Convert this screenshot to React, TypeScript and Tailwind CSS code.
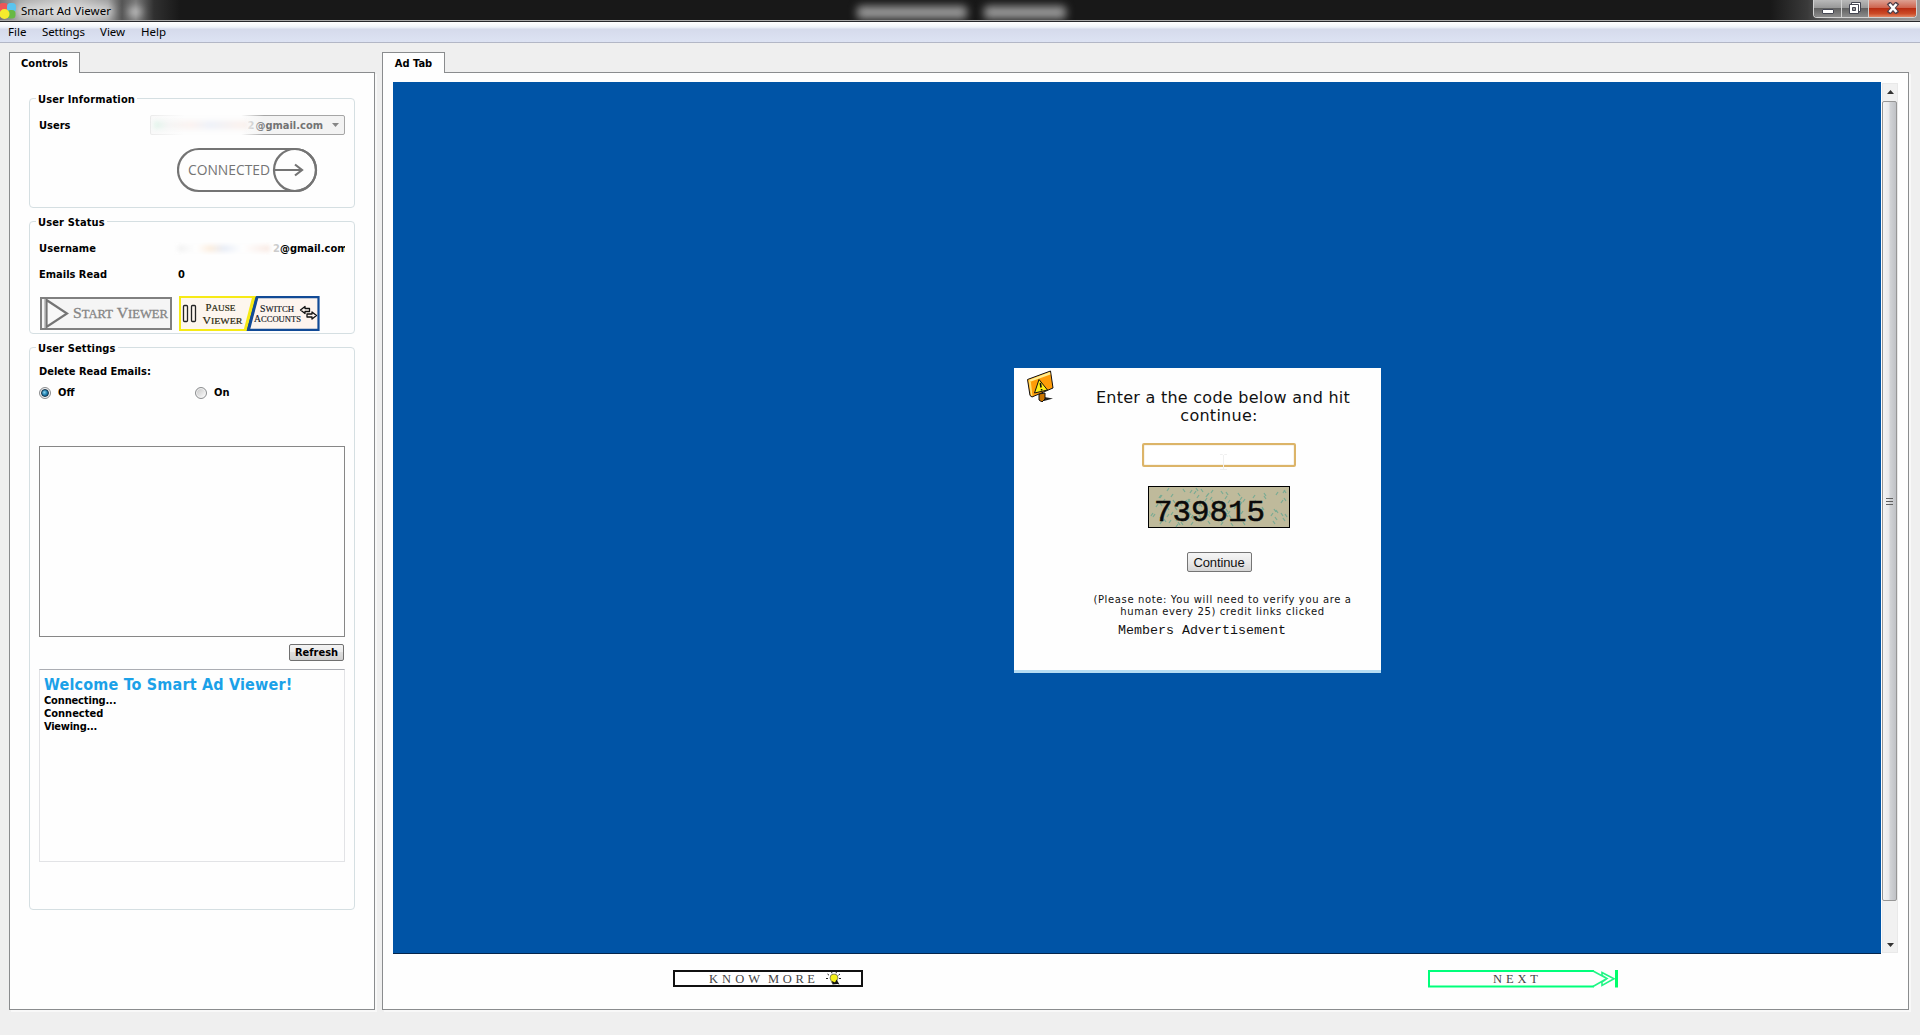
import React from "react";

const TAHOMA = "font-['DejaVu_Sans_Condensed','DejaVu_Sans',sans-serif] [font-stretch:condensed] font-bold text-[11px] leading-[13px] whitespace-nowrap";

function Group({ title, className, children }: { title: string; className: string; children: React.ReactNode }) {
  return (
    <section className={`relative w-[326px] shrink-0 rounded-[4px] border border-[#d5dfe2] ${className}`}>
      <h2 className={`absolute -top-[6px] left-[6px] bg-[#fefefe] px-[2px] tracking-[0.15px] ${TAHOMA}`}>{title}</h2>
      {children}
    </section>
  );
}

function Panel({ tab, tabClass, className, children }: { tab: string; tabClass: string; className: string; children: React.ReactNode }) {
  return (
    <div className={`flex flex-col ${className}`}>
      <div className={`relative z-10 -mb-px flex h-[21px] items-center justify-center border border-b-0 border-[#8a8c8e] bg-[#fefefe] ${tabClass} ${TAHOMA}`}>{tab}</div>
      <div className="flex min-h-0 flex-1 flex-col border border-[#8a8c8e] bg-[#fefefe] shadow-[2px_2px_0_#f8f8f8]">{children}</div>
    </div>
  );
}

function Logo() {
  return (
    <svg className="h-[16px] w-[16px]" viewBox="0 0 16 16">
      <rect x="-1" y="0" width="9" height="9" rx="3.5" fill="#ed5757" />
      <rect x="7" y="0" width="9" height="9" rx="3.5" fill="#5ac4ee" />
      <rect x="7" y="7" width="8.500" height="8.500" rx="3.500" fill="#68b944" />
      <circle cx="4.500" cy="11" r="5" fill="#f5eb2d" />
    </svg>
  );
}

function TitleBar() {
  return (
    <header className="relative flex h-[22px] shrink-0 items-start overflow-hidden border-b border-[#26272b] bg-[#181818] shadow-[inset_0_-1px_0_#a9a9a9]">
      <div className="absolute inset-y-0 left-0 h-[20px] w-[180px] bg-[linear-gradient(to_right,#777_0,#aaa_20px,#c4c4c4_70px,#9a9a9a_108px,#555_122px,#777_136px,#303030_154px,#181818_180px)]" />
      <div className="absolute top-[4px] left-[16px] h-[14px] w-[98px] rounded-full bg-white/50 blur-[4px]" />
      <div className="absolute top-[7px] left-[128px] h-[10px] w-[14px] rounded-full bg-white/60 blur-[4px]" />
      <div className="absolute top-[6px] left-[857px] h-[13px] w-[110px] rounded bg-[#999] blur-[4px]" />
      <div className="absolute top-[6px] left-[984px] h-[13px] w-[82px] rounded bg-[#999] blur-[4px]" />
      <div className="absolute top-0 right-0 h-[20px] w-[150px] bg-[linear-gradient(to_right,#181818,#3a3a3a_25%,#777_45%,#999)]" />
      <div className="relative flex pt-[3px]">
        <Logo />
        <span className="ml-[5px] font-['Noto_Sans',sans-serif] text-[11.5px] leading-[16px] tracking-[0.05px] whitespace-nowrap text-black">Smart Ad Viewer</span>
      </div>
      <div className="relative mr-[3px] ml-auto flex h-[18px] w-[104px] overflow-hidden rounded-b-[4px] border border-t-0 border-[#d2d2d2] bg-[#444]">
        <button className="flex w-[28px] items-center justify-center border-r border-[#d2d2d2] bg-[linear-gradient(#b9b9b9_0,#999_45%,#626262_50%,#8c8c8c)]">
          <svg className="mt-[4px]" width="14" height="8"><rect x="1.500" y="2.500" width="11" height="4" rx=".5" fill="#fff" stroke="#454752" /></svg>
        </button>
        <button className="flex w-[27px] items-center justify-center border-r border-[#d2d2d2] bg-[linear-gradient(#b9b9b9_0,#999_45%,#626262_50%,#8c8c8c)]">
          <svg className="-mt-[2px]" width="14" height="14" viewBox="0 0 14 14">
            <path d="M3.500 1.500h9v9h-9z" fill="#fff" stroke="#454752" />
            <path d="M1.500 3.500h9v9h-9z" fill="#fff" stroke="#454752" />
            <path d="M4.500 6.500h3v3h-3z" fill="#999" stroke="#454752" />
          </svg>
        </button>
        <button className="flex flex-1 items-center justify-center bg-[linear-gradient(#dda092_0,#cf6651_44%,#b92d13_50%,#cc4b27_80%,#e28663)]">
          <svg className="-mt-[2px]" width="14" height="12" viewBox="0 0 14 12">
            <path d="M4 2.500l6 7M10 2.500l-6 7" stroke="#50404a" strokeWidth="4.600" strokeLinecap="square" />
            <path d="M3.500 2l7 8M10.500 2l-7 8" stroke="#fff" strokeWidth="2.600" />
          </svg>
        </button>
      </div>
    </header>
  );
}

function MenuBar() {
  return (
    <nav className="flex h-[21px] shrink-0 border-b border-[#b3b7c6] bg-[linear-gradient(#ffffff_0,#f4f7fb_4px,#e6ebf5_6px,#d5daeb_7px,#dde3f3_20px)] font-['Noto_Sans',sans-serif] text-[11.5px] leading-[20px] text-black">
      <span className="w-[34px] pl-[8px]">File</span>
      <span className="w-[58px] pl-[8px] tracking-[-0.1px]">Settings</span>
      <span className="w-[41px] pl-[8px]">View</span>
      <span className="w-[50px] pl-[8px]">Help</span>
    </nav>
  );
}

function ConnectedButton() {
  return (
    <svg className="mt-[12px] ml-[147px] block h-[46px] w-[141px] font-normal [font-stretch:normal]" viewBox="0 0 141 46">
      <rect x="1" y="2" width="138" height="42" rx="21" fill="none" stroke="#747474" strokeWidth="2.200" />
      <circle cx="118" cy="23" r="21" fill="none" stroke="#747474" strokeWidth="2.200" />
      <path d="M97 23h28M118 17.500l7 5.500-7 5.500" fill="none" stroke="#747474" strokeWidth="2.200" />
      <text x="11" y="28.300" fontFamily="Open Sans, sans-serif" fontSize="14" textLength="82" lengthAdjust="spacingAndGlyphs" fill="#747474">CONNECTED</text>
    </svg>
  );
}

function StartButton() {
  return (
    <svg className="block h-[33px] w-[132px]" viewBox="0 0 132 33">
      <rect x="1" y="1" width="130" height="31" fill="#f5f5f5" stroke="#808080" strokeWidth="2" />
      <path d="M6.500 3L27 16.500 6.500 30z" fill="#f8f8f8" stroke="#747474" strokeWidth="2.200" />
      <path d="M4.500 2v29" stroke="#c4c4c4" />
      <text x="33" y="21" fontFamily="Liberation Serif, serif" fontSize="15" fill="#858585" stroke="#858585" strokeWidth=".3" textLength="95" lengthAdjust="spacingAndGlyphs">S<tspan fontSize="12">TART</tspan> V<tspan fontSize="12">IEWER</tspan></text>
    </svg>
  );
}

function PauseSwitchButtons() {
  return (
    <svg className="ml-[7px] block h-[35px] w-[141px]" viewBox="0 0 141 35" fontFamily="Liberation Serif, serif">
      <path d="M1 1h75L67.500 34H1z" fill="#fdf6ee" stroke="#f6ea16" strokeWidth="2" />
      <path d="M75 1L66.500 34" stroke="#f6ea16" strokeWidth="3.500" />
      <path d="M78 1.200h61.500v32.600H69z" fill="#fdf4ee" stroke="#114a96" strokeWidth="2.200" />
      <path d="M78 1L69.500 34" stroke="#114a96" strokeWidth="3" />
      <rect x="4.500" y="9.500" width="4" height="16" rx="1" fill="none" stroke="#252525" strokeWidth="1.300" />
      <rect x="12.500" y="9.500" width="4" height="16" rx="1" fill="none" stroke="#252525" strokeWidth="1.300" />
      <g fill="#29290e" stroke="#29290e" strokeWidth=".2">
        <text x="26.500" y="15" fontSize="10.500" textLength="30" lengthAdjust="spacingAndGlyphs">P<tspan fontSize="9">AUSE</tspan></text>
        <text x="23.500" y="27.500" fontSize="10.500" textLength="40" lengthAdjust="spacingAndGlyphs">V<tspan fontSize="9">IEWER</tspan></text>
      </g>
      <g fill="#14181f" stroke="#14181f" strokeWidth=".15">
        <text x="81" y="15.500" fontSize="9.500" textLength="34" lengthAdjust="spacingAndGlyphs">S<tspan fontSize="8.500">WITCH</tspan></text>
        <text x="75" y="25.500" fontSize="9.500" textLength="47" lengthAdjust="spacingAndGlyphs">A<tspan fontSize="8.500">CCOUNTS</tspan></text>
      </g>
      <g fill="#fdf4ee" stroke="#111" strokeWidth="1.300" strokeLinejoin="round">
        <path d="M121.500 14l4.500-3.500v2h4.500v3H126v2z" />
        <path d="M137.500 19.500l-4.500 3.500v-2h-5v-3h5v-2z" />
      </g>
    </svg>
  );
}

function Radio({ checked }: { checked?: boolean }) {
  return (
    <span className="flex h-[12px] w-[12px] items-center justify-center rounded-full border border-[#8b8d8f] bg-[linear-gradient(135deg,#c4c4c4,#fff)] shadow-[inset_0_0_0_1px_#f4f4f4]">
      {checked && <span className="h-[8px] w-[8px] shrink-0 rounded-full border border-[#13344d] bg-[radial-gradient(circle_at_40%_40%,#8fd4ee,#1f80b0_50%,#0f4b70)]" />}
    </span>
  );
}

function Controls() {
  return (
    <Panel tab="Controls" tabClass="w-[71px]" className="w-[366px]">
      <div className={`flex flex-col pt-[25px] pl-[19px] ${TAHOMA}`}>
        <Group title="User Information" className="h-[110px]">
          <div className="mt-[16px] ml-[9px] flex h-[20px] items-center">
            <span className="w-[111px]">Users</span>
            <div className="relative">
              <span className="flex h-[20px] w-[195px] items-center justify-end rounded-[2px] border border-[#a6a6a6] bg-[#f3f3f3] pr-[21px] text-[#737373]">
                <span className="mr-[1px] text-[#aaa]">2</span>@gmail.com
                <svg className="absolute right-[6px]" width="7" height="4"><path d="M0 0h7L3.500 4z" fill="#868686" /></svg>
              </span>
              <span className="absolute inset-y-0 left-0 w-[114px] bg-[linear-gradient(to_right,#fafafad0_0,#fdfdfd_30%,#fdfdfd_80%,#fdfdfd00)]" />
              <span className="absolute top-[6px] left-[4px] h-[8px] w-[94px] bg-[linear-gradient(to_right,#c8f0dc,#eee_15%,#f8e8e4_40%,#dfe6f4_60%,#f6e6e0_90%)] opacity-50 blur-[2px]" />
            </div>
          </div>
          <ConnectedButton />
        </Group>
        <Group title="User Status" className="mt-[13px] h-[113px]">
          <div className="mt-[20px] ml-[9px] flex h-[13px] w-[306px] overflow-hidden">
            <span className="w-[139px] shrink-0 tracking-[0.1px]">Username</span>
            <span className="mt-[3px] h-[7px] w-[92px] shrink-0 bg-[linear-gradient(to_right,#eee,#fff_20%,#fbe9d6_35%,#e2e8f4_50%,#fff_70%,#f7e4dc)] opacity-80 blur-[2px]" />
            <span className="ml-[3px] w-[7px] shrink-0 text-[#ccc]">2</span>
            <span>@gmail.com</span>
          </div>
          <div className="mt-[13px] ml-[9px] flex h-[13px]">
            <span className="w-[139px]">Emails Read</span>
            <span>0</span>
          </div>
          <div className="mt-[15px] ml-[10px] flex items-center font-normal [font-stretch:normal]">
            <StartButton />
            <PauseSwitchButtons />
          </div>
        </Group>
        <Group title="User Settings" className="mt-[13px] h-[563px]">
          <div className="mt-[17px] ml-[9px]">Delete Read Emails:</div>
          <div className="mt-[8px] ml-[9px] flex items-center">
            <Radio checked />
            <span className="ml-[7px] w-[137px]">Off</span>
            <Radio />
            <span className="ml-[7px]">On</span>
          </div>
          <div className="mt-[47px] ml-[9px] h-[191px] w-[306px] border border-[#878787] bg-[#fefefe]" />
          <button className="mt-[7px] ml-[259px] flex h-[17px] w-[55px] items-center justify-center rounded-[2px] border border-[#707070] bg-[linear-gradient(#f3f3f3,#ebebeb_49%,#dddddd_50%,#cfcfcf)]">Refresh</button>
          <div className="mt-[8px] ml-[9px] h-[193px] w-[306px] border border-[#e2e3e6] border-t-[#abadb3] pt-[5px] pl-[4px]">
            <div className="text-[16px] leading-[20px] tracking-[0.18px] text-[#1ba1e8]">Welcome To Smart Ad Viewer!</div>
            <div className="mt-[-1px] tracking-[-0.15px]">Connecting...</div>
            <div>Connected</div>
            <div className="tracking-[-0.25px]">Viewing...</div>
          </div>
        </Group>
      </div>
    </Panel>
  );
}

function WarningSign() {
  return (
    <svg className="absolute top-[2px] left-[12px] h-[32px] w-[30px]" viewBox="0 0 30 32">
      <path d="M14 28l4 3 9-2.500-9-1.500z" fill="#222" />
      <path d="M13 24v6l3 2 3-3v-6z" fill="#c87400" stroke="#111" />
      <path d="M1.500 9.500L24.500 1l2.500 17L6 27l-2-1.500z" fill="#ff9c08" stroke="#111" />
      <path d="M2.500 10L24 2l.4 2.500L5 11.500z" fill="#ffed8e" />
      <path d="M2.500 10l2.300 1.500L6.500 26l-1.500-.5z" fill="#ffe06b" />
      <path d="M13 9.500l8.500 10.500-13 3z" fill="#ffed16" stroke="#111" />
      <path d="M14.300 13l.8 4.500M15.600 19v1.500" stroke="#111" strokeWidth="1.600" />
    </svg>
  );
}

function Captcha() {
  const specks: string[] = [];
  let s = 7;
  for (let i = 0; i < 110; i++) {
    s = (s * 16807) % 2147483647;
    const x = 4 + (s % 134);
    s = (s * 16807) % 2147483647;
    const y = 2 + (s % 37);
    specks.push(`M${x} ${y}l${i % 2 ? 2 : -2} 3`);
  }
  return (
    <svg className="mx-auto mt-[19px] block h-[42px] w-[142px]" viewBox="0 0 142 42">
      <rect x=".5" y=".5" width="141" height="41" fill="#bfba9b" stroke="#000" />
      <path d={specks.join("")} stroke="#5fa590" strokeWidth="1.300" opacity=".7" />
      <text x="6" y="35" fontFamily="Liberation Mono, monospace" fontSize="29" fill="#0a0a0a" stroke="#0a0a0a" strokeWidth=".5" textLength="111" lengthAdjust="spacingAndGlyphs">739815</text>
    </svg>
  );
}

function Dialog() {
  return (
    <div className="relative mt-[286px] ml-[621px] h-[305px] w-[367px] border-b-[3px] border-[#b5dcf3] bg-[#fefefe] pl-[43px] text-[#111]">
      <WarningSign />
      <div className="pt-[21px] text-center font-['DejaVu_Sans',sans-serif] text-[16px] leading-[18px] tracking-[0.26px] whitespace-nowrap">
        <div className="pl-[8px]">Enter a the code below and hit</div>
        <div>continue:</div>
      </div>
      <div className="relative mx-auto mt-[18px] h-[24px] w-[154px] rounded-[2px] border-2 border-[#dcb468] bg-white shadow-[inset_0_0_1px_#b58b3b]">
        <svg className="absolute top-[9px] left-[76px]" width="7" height="16"><path d="M0 .5h2.500l1 1 1-1H7M3.500 1v14M0 15.500h7" stroke="#f0f0f0" fill="none" /></svg>
      </div>
      <Captcha />
      <button className="mx-auto mt-[24px] flex h-[20px] w-[65px] items-center justify-center rounded-[2px] border border-[#757575] bg-[linear-gradient(#f5f5f5,#e9e9e9_50%,#d5d5d5)] pt-px font-['Liberation_Sans',sans-serif] text-[13px] tracking-[-0.1px]">Continue</button>
      <div className="mt-[22px] pl-[7px] text-center font-['DejaVu_Sans',sans-serif] text-[10px] leading-[12px] tracking-[0.63px] whitespace-nowrap">
        (Please note: You will need to verify you are a
        <br />
        human every 25) credit links clicked
      </div>
      <div className="mt-[5px] ml-[61px] font-['Liberation_Mono',monospace] text-[13.33px] leading-[15px] whitespace-nowrap">Members Advertisement</div>
    </div>
  );
}

function ScrollBar() {
  return (
    <div className="mt-px ml-px flex h-[870px] w-[16px] flex-col items-center border border-[#e9e9e9] bg-[#f1f1f1]">
      <svg className="mt-[6px] h-[4px] w-[7px]" viewBox="0 0 7 4"><path d="M3.500 0L7 4H0z" fill="#333" /></svg>
      <div className="mt-[7px] mr-px flex h-[800px] w-[15px] flex-col items-center justify-center gap-[2px] rounded-[2px] border border-[#969696] bg-[linear-gradient(to_right,#f5f5f5,#e9e9eb_45%,#d1d3d6_55%,#bfc1c5)]">
        <i className="h-px w-[7px] bg-[#606060]" />
        <i className="h-px w-[7px] bg-[#606060]" />
        <i className="h-px w-[7px] bg-[#606060]" />
      </div>
      <svg className="mt-auto mb-[5px] h-[4px] w-[7px]" viewBox="0 0 7 4"><path d="M0 0h7L3.500 4z" fill="#333" /></svg>
    </div>
  );
}

function KnowMore() {
  return (
    <svg className="ml-[290px] block h-[17px] w-[190px]" viewBox="0 0 190 17">
      <rect x="1" y="1" width="188" height="15" fill="#fff" stroke="#111" strokeWidth="2" />
      <text x="36" y="12.500" fontFamily="Liberation Serif, serif" fontSize="12.500" fill="#444" textLength="51">KNOW</text>
      <text x="95" y="12.500" fontFamily="Liberation Serif, serif" fontSize="12.500" fill="#444" textLength="47">MORE</text>
      <path d="M153 8.500h2M154.500 4l1.500 1.200M158.500 1.800l.5 1.500M163.500 1.800l-.5 1.500M167 4l-1.500 1.200M168 8.500h-2" stroke="#222" />
      <path d="M157 8a4 4 0 1 1 8 0l-2 5h-4z" fill="#f5f018" stroke="#555" strokeWidth=".7" />
      <path d="M159 11l3 1.500 1.500-3 3 5-2-.5-5 .5z" fill="#111" />
    </svg>
  );
}

function NextButton() {
  return (
    <svg className="ml-[565px] block h-[18px] w-[191px]" viewBox="0 0 191 18">
      <path d="M166 1H1v15.500h165" fill="none" stroke="#00ff7b" strokeWidth="2" />
      <path d="M165 1l14 7.500-14 8M174 2.500l12 6.200L174 15.500v-3.500l5-3.500-5-3z" fill="none" stroke="#20f585" strokeWidth="1.600" />
      <path d="M188.500 0v17.500" stroke="#00ff6a" strokeWidth="3" />
      <text x="65" y="12.500" fontFamily="Liberation Serif, serif" fontSize="12.500" fill="#444" textLength="45">NEXT</text>
    </svg>
  );
}

function AdTab() {
  return (
    <Panel tab="Ad Tab" tabClass="w-[63px]" className="ml-[7px] w-[1527px]">
      <div className="mt-[9px] ml-[10px] flex">
        <div className="flex h-[872px] w-[1488px] items-start border-b border-[#04254c] bg-[#0054a6]">
          <Dialog />
        </div>
        <ScrollBar />
      </div>
      <div className="mt-[16px] flex">
        <KnowMore />
        <NextButton />
      </div>
    </Panel>
  );
}

export default function App() {
  return (
    <div className="flex h-[1035px] w-[1920px] flex-col overflow-hidden bg-[#efefef] text-black">
      <TitleBar />
      <MenuBar />
      <main className="mt-[9px] ml-[9px] flex h-[958px]">
        <Controls />
        <AdTab />
      </main>
    </div>
  );
}
